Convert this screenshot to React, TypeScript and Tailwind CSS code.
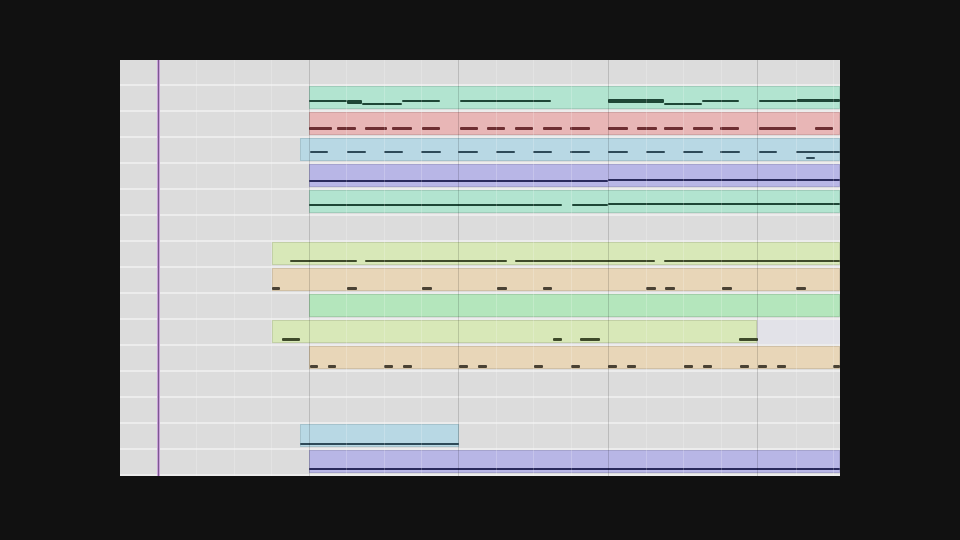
// piano-roll style arrangement view: 16 tracks, clips with note strips
type Note = [number, number, number, number]; // x1, x2 (page px), top offset, height

type Clip = {
  x1: number;
  x2: number;
  bg: string;
  ink: string;
  notes: Note[];
};

const ORIGIN = 120;

const dash = (xs: [number, number][], top: number, h: number): Note[] =>
  xs.map(([a, b]) => [a, b, top, h]);

const teal = { bg: "bg-[#b2e4d0]", ink: "bg-[#1e4636]" };
const red = { bg: "bg-[#e8b6b6]", ink: "bg-[#6e2e32]" };
const blue = { bg: "bg-[#b8d8e4]", ink: "bg-[#2e4a58]" };
const purple = { bg: "bg-[#b8b6e6]", ink: "bg-[#2a2a5c]" };
const lime = { bg: "bg-[#d8e8b8]", ink: "bg-[#3e4a2a]" };
const tan = { bg: "bg-[#e8d6b8]", ink: "bg-[#4a4234]" };
const green = { bg: "bg-[#b4e6bc]", ink: "bg-[#2a4a30]" };

const tracks: Clip[][] = [
  [],
  [
    {
      x1: 309, x2: 840, ...teal,
      notes: [
        [309, 347, 14, 2], [347, 362, 14, 4], [362, 402, 17, 2], [402, 440, 14, 2],
        [460, 551, 14, 2], [608, 664, 13, 4], [664, 702, 17, 2], [702, 739, 14, 2],
        [759, 797, 14, 2], [797, 840, 13, 3],
      ],
    },
  ],
  [
    {
      x1: 309, x2: 840, ...red,
      notes: dash(
        [
          [309, 332], [337, 356], [365, 387], [392, 412], [422, 440], [460, 478],
          [487, 505], [515, 533], [543, 562], [570, 590], [608, 628], [637, 657],
          [664, 683], [693, 713], [720, 739], [759, 796], [815, 833],
        ],
        15, 3
      ),
    },
  ],
  [
    {
      x1: 300, x2: 840, ...blue,
      notes: [
        ...dash(
          [
            [310, 328], [347, 366], [384, 403], [421, 441], [458, 478], [496, 515],
            [533, 552], [570, 590], [608, 628], [646, 665], [683, 703], [720, 740],
            [759, 777], [796, 840],
          ],
          13, 2
        ),
        [806, 815, 19, 2],
      ],
    },
  ],
  [{ x1: 309, x2: 840, ...purple, notes: [[309, 608, 16, 2], [608, 840, 15, 2]] }],
  [{ x1: 309, x2: 840, ...teal, notes: [[309, 562, 14, 2], [572, 608, 14, 2], [608, 840, 13, 2]] }],
  [],
  [
    {
      x1: 272, x2: 840, ...lime,
      notes: [[290, 357, 18, 2], [365, 507, 18, 2], [515, 655, 18, 2], [664, 840, 18, 2]],
    },
  ],
  [
    {
      x1: 272, x2: 840, ...tan,
      notes: dash(
        [[272, 280], [347, 357], [422, 432], [497, 507], [543, 552], [646, 656], [665, 675], [722, 732], [796, 806]],
        19, 3
      ),
    },
  ],
  [{ x1: 309, x2: 840, ...green, notes: [] }],
  [
    {
      x1: 272, x2: 757, ...lime,
      notes: dash([[282, 300], [553, 562], [580, 600], [739, 758]], 18, 3),
    },
  ],
  [
    {
      x1: 309, x2: 840, ...tan,
      notes: dash(
        [
          [310, 318], [328, 336], [384, 393], [403, 412], [459, 468], [478, 487],
          [534, 543], [571, 580], [608, 617], [627, 636], [684, 693], [703, 712],
          [740, 749], [758, 767], [777, 786], [833, 840],
        ],
        19, 3
      ),
    },
  ],
  [],
  [],
  [{ x1: 300, x2: 459, ...blue, notes: [[300, 459, 19, 2]] }],
  [{ x1: 309, x2: 840, ...purple, notes: [[309, 840, 18, 2]] }],
];

const bars = [309, 458, 608, 757];
const beats = [159, 196, 234, 271, 346, 384, 421, 496, 533, 571, 646, 683, 721, 796, 833];

function ClipBox({ clip }: { clip: Clip }) {
  return (
    <div
      className={`absolute top-0 h-[23px] border border-black/10 ${clip.bg}`}
      style={{ left: clip.x1 - ORIGIN, width: clip.x2 - clip.x1 }}
    >
      {clip.notes.map(([a, b, top, h], i) => (
        <div
          key={i}
          className={`absolute rounded-[1px] ${clip.ink}`}
          style={{ left: a - clip.x1 - 1, width: b - a, top: top - 1, height: h }}
        />
      ))}
    </div>
  );
}

function Track({ clips, idx }: { clips: Clip[]; idx: number }) {
  return (
    <div className="relative h-[26px] border-b-2 border-[#ececec] bg-[#dcdcdc]">
      {idx === 10 && <div className="absolute top-0 left-[637px] right-0 h-[24px] bg-[#e2e2e8]" />}
      {clips.map((c, i) => (
        <ClipBox key={i} clip={c} />
      ))}
    </div>
  );
}

export default function App() {
  return (
    <div className="w-[960px] h-[540px] bg-[#111111] pt-[60px] pl-[120px]">
      <div className="relative w-[720px] h-[416px] overflow-hidden bg-[#dcdcdc]">
        <div className="flex flex-col">
          {tracks.map((clips, i) => (
            <Track key={i} clips={clips} idx={i} />
          ))}
        </div>

        {/* grid lines over the clips */}
        {beats.map((x) => (
          <div key={x} className="absolute top-0 bottom-0 w-px bg-white/20" style={{ left: x - ORIGIN }} />
        ))}
        {bars.map((x) => (
          <div key={x} className="absolute top-0 bottom-0 w-px bg-black/15" style={{ left: x - ORIGIN }} />
        ))}

        {/* playhead */}
        <div className="absolute top-0 bottom-0 left-[37px] flex">
          <div className="w-px bg-[#c8a2d8]" />
          <div className="w-px bg-[#7c5890]" />
          <div className="w-px bg-[#c8a2d8]" />
        </div>
      </div>
    </div>
  );
}
